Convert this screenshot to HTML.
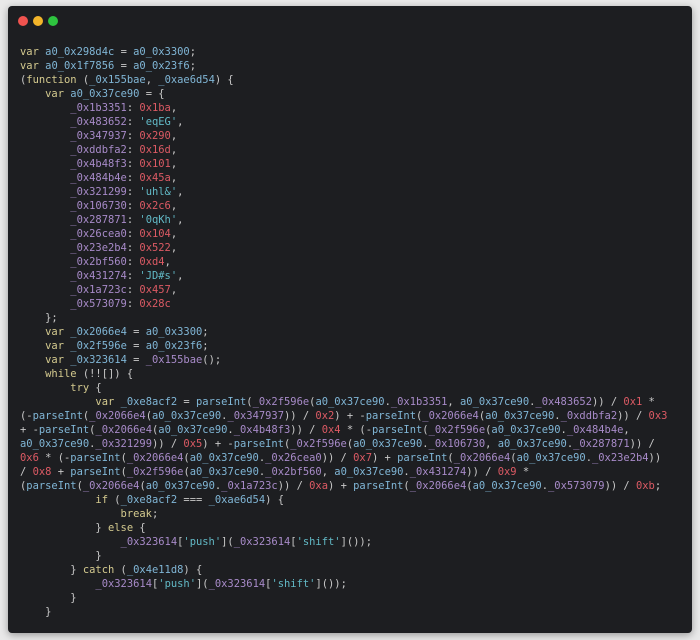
<!DOCTYPE html>
<html><head><meta charset="utf-8"><style>
html,body{margin:0;padding:0;width:700px;height:640px;background:#e9e9e9;overflow:hidden}
.win{position:absolute;left:8px;top:6px;width:684px;height:627px;background:#1d1e21;border-radius:4px;box-shadow:0 2px 8px rgba(0,0,0,.35)}
.dot{position:absolute;top:10px;width:10px;height:10px;border-radius:50%}
pre{position:absolute;left:12px;top:39px;margin:0;font-family:"DejaVu Sans Mono","Liberation Mono",monospace;font-size:10.45px;line-height:14px;color:#c9c9c9;white-space:pre}
.k{color:#d4ca8f}.v{color:#80b6d6}.p{color:#a88bc9}.n{color:#dc5a64}.s{color:#62b9c6}
</style></head><body>
<div class="win">
<div class="dot" style="left:10px;background:#f0534f"></div>
<div class="dot" style="left:25px;background:#f3b52a"></div>
<div class="dot" style="left:40px;background:#2ec43f"></div>
<pre><span class="k">var</span> <span class="v">a0_0x298d4c</span> = <span class="v">a0_0x3300</span>;
<span class="k">var</span> <span class="v">a0_0x1f7856</span> = <span class="v">a0_0x23f6</span>;
(<span class="k">function</span> (<span class="v">_0x155bae</span>, <span class="v">_0xae6d54</span>) {
    <span class="k">var</span> <span class="v">a0_0x37ce90</span> = {
        <span class="p">_0x1b3351</span>: <span class="n">0x1ba</span>,
        <span class="p">_0x483652</span>: <span class="s">'eqEG'</span>,
        <span class="p">_0x347937</span>: <span class="n">0x290</span>,
        <span class="p">_0xddbfa2</span>: <span class="n">0x16d</span>,
        <span class="p">_0x4b48f3</span>: <span class="n">0x101</span>,
        <span class="p">_0x484b4e</span>: <span class="n">0x45a</span>,
        <span class="p">_0x321299</span>: <span class="s">'uhl&amp;'</span>,
        <span class="p">_0x106730</span>: <span class="n">0x2c6</span>,
        <span class="p">_0x287871</span>: <span class="s">'0qKh'</span>,
        <span class="p">_0x26cea0</span>: <span class="n">0x104</span>,
        <span class="p">_0x23e2b4</span>: <span class="n">0x522</span>,
        <span class="p">_0x2bf560</span>: <span class="n">0xd4</span>,
        <span class="p">_0x431274</span>: <span class="s">'JD#s'</span>,
        <span class="p">_0x1a723c</span>: <span class="n">0x457</span>,
        <span class="p">_0x573079</span>: <span class="n">0x28c</span>
    };
    <span class="k">var</span> <span class="v">_0x2066e4</span> = <span class="v">a0_0x3300</span>;
    <span class="k">var</span> <span class="v">_0x2f596e</span> = <span class="v">a0_0x23f6</span>;
    <span class="k">var</span> <span class="v">_0x323614</span> = <span class="p">_0x155bae</span>();
    <span class="k">while</span> (!![]) {
        <span class="k">try</span> {
            <span class="k">var</span> <span class="v">_0xe8acf2</span> = <span class="v">parseInt</span>(<span class="p">_0x2f596e</span>(<span class="v">a0_0x37ce90</span>.<span class="p">_0x1b3351</span>, <span class="v">a0_0x37ce90</span>.<span class="p">_0x483652</span>)) / <span class="n">0x1</span> *
(-<span class="v">parseInt</span>(<span class="p">_0x2066e4</span>(<span class="v">a0_0x37ce90</span>.<span class="p">_0x347937</span>)) / <span class="n">0x2</span>) + -<span class="v">parseInt</span>(<span class="p">_0x2066e4</span>(<span class="v">a0_0x37ce90</span>.<span class="p">_0xddbfa2</span>)) / <span class="n">0x3</span>
+ -<span class="v">parseInt</span>(<span class="p">_0x2066e4</span>(<span class="v">a0_0x37ce90</span>.<span class="p">_0x4b48f3</span>)) / <span class="n">0x4</span> * (-<span class="v">parseInt</span>(<span class="p">_0x2f596e</span>(<span class="v">a0_0x37ce90</span>.<span class="p">_0x484b4e</span>,
<span class="v">a0_0x37ce90</span>.<span class="p">_0x321299</span>)) / <span class="n">0x5</span>) + -<span class="v">parseInt</span>(<span class="p">_0x2f596e</span>(<span class="v">a0_0x37ce90</span>.<span class="p">_0x106730</span>, <span class="v">a0_0x37ce90</span>.<span class="p">_0x287871</span>)) /
<span class="n">0x6</span> * (-<span class="v">parseInt</span>(<span class="p">_0x2066e4</span>(<span class="v">a0_0x37ce90</span>.<span class="p">_0x26cea0</span>)) / <span class="n">0x7</span>) + <span class="v">parseInt</span>(<span class="p">_0x2066e4</span>(<span class="v">a0_0x37ce90</span>.<span class="p">_0x23e2b4</span>))
/ <span class="n">0x8</span> + <span class="v">parseInt</span>(<span class="p">_0x2f596e</span>(<span class="v">a0_0x37ce90</span>.<span class="p">_0x2bf560</span>, <span class="v">a0_0x37ce90</span>.<span class="p">_0x431274</span>)) / <span class="n">0x9</span> *
(<span class="v">parseInt</span>(<span class="p">_0x2066e4</span>(<span class="v">a0_0x37ce90</span>.<span class="p">_0x1a723c</span>)) / <span class="n">0xa</span>) + <span class="v">parseInt</span>(<span class="p">_0x2066e4</span>(<span class="v">a0_0x37ce90</span>.<span class="p">_0x573079</span>)) / <span class="n">0xb</span>;
            <span class="k">if</span> (<span class="v">_0xe8acf2</span> === <span class="v">_0xae6d54</span>) {
                <span class="k">break</span>;
            } <span class="k">else</span> {
                <span class="p">_0x323614</span>[<span class="s">'push'</span>](<span class="p">_0x323614</span>[<span class="s">'shift'</span>]());
            }
        } <span class="k">catch</span> (<span class="v">_0x4e11d8</span>) {
            <span class="p">_0x323614</span>[<span class="s">'push'</span>](<span class="p">_0x323614</span>[<span class="s">'shift'</span>]());
        }
    }</pre>
</div>
</body></html>
